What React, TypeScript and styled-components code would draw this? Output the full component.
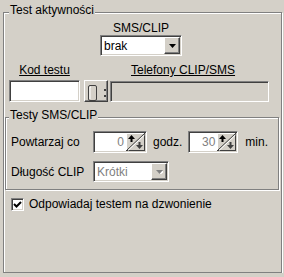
import styled, { createGlobalStyle } from "styled-components";

const Global = createGlobalStyle`
  * { box-sizing: border-box; }
  body {
    margin: 0;
    background: #d4d0c8;
    font-family: "Liberation Sans", Arial, sans-serif;
    font-size: 12px;
    line-height: 14px;
    color: #000;
  }
`;

const Group = styled.div<{ $h: number }>`
  position: relative;
  display: flex;
  flex-direction: column;
  height: ${p => p.$h}px;
  border: 1px solid #808080;
  box-shadow: 1px 1px 0 #fff, inset 1px 1px 0 #fff;
`;

const Outer = styled(Group)`
  margin: 12px 0 0 3px;
  width: 279px;
`;

const Inner = styled(Group)`
  margin: 15px 0 0 1px;
  width: 274px;
  padding-left: 5px;
`;

const Legend = styled.span<{ $x: number }>`
  position: absolute;
  top: -10px;
  left: ${p => p.$x}px;
  padding: 0 1px;
  background: #d4d0c8;
  white-space: nowrap;
`;

const SmsBlock = styled.div`
  margin: 8px 0 0 96px;
  width: 82px;
  display: flex;
  flex-direction: column;
  align-items: center;
`;

const Sunken = styled.div<{ $w: number; $h: number; $bg?: string }>`
  width: ${p => p.$w}px;
  height: ${p => p.$h}px;
  flex: none;
  display: flex;
  align-items: center;
  background: ${p => p.$bg ?? "#fff"};
  border: 1px solid;
  border-color: #808080 #fff #fff #808080;
  box-shadow: inset 1px 1px 0 #404040, inset -1px -1px 0 #d4d0c8;
  padding: 1px;
`;

const Value = styled.span<{ $off?: boolean; $right?: boolean }>`
  flex: 1;
  padding: 0 2px;
  color: ${p => (p.$off ? "#808080" : "#000")};
  text-align: ${p => (p.$right ? "right" : "left")};
  white-space: nowrap;
`;

const Raised = styled.div<{ $w: number; $h: number }>`
  width: ${p => p.$w}px;
  height: ${p => p.$h}px;
  flex: none;
  display: flex;
  align-items: center;
  justify-content: center;
  background: #d4d0c8;
  border: 1px solid;
  border-color: #fff #404040 #404040 #fff;
  box-shadow: inset -1px -1px 0 #808080;
`;

const PickButton = styled(Raised)`
  margin-left: 4px;
  align-items: flex-end;
`;

const Row = styled.div<{ $top: number; $left?: number }>`
  display: flex;
  align-items: center;
  margin-top: ${p => p.$top}px;
  padding-left: ${p => p.$left ?? 0}px;
`;

const Under = styled.span<{ $w?: number; $ml?: number }>`
  text-decoration: underline;
  text-align: center;
  width: ${p => (p.$w ? `${p.$w}px` : "auto")};
  margin-left: ${p => p.$ml ?? 0}px;
  white-space: nowrap;
`;

const Caption = styled.span<{ $w?: number; $ml?: number; $mr?: number }>`
  width: ${p => (p.$w ? `${p.$w}px` : "auto")};
  margin-left: ${p => p.$ml ?? 0}px;
  margin-right: ${p => p.$mr ?? 0}px;
  flex: none;
  white-space: nowrap;
`;

const PhoneField = styled(Sunken)`
  margin-left: 2px;
`;

const Check = styled(Sunken)`
  justify-content: center;
`;

const Arrow = ({ off }: { off?: boolean }) => (
  <svg width="7" height="4" viewBox="0 0 7 4">
    {off && <polygon points="1,1 8,1 4.5,5" fill="#fff" />}
    <polygon points="0,0 7,0 3.5,4" fill={off ? "#808080" : "#000"} />
  </svg>
);

const Combo = ({ w, text, off }: { w: number; text: string; off?: boolean }) => (
  <Sunken $w={w} $h={21}>
    <Value $off={off}>{text}</Value>
    <Raised $w={16} $h={17}>
      <Arrow off={off} />
    </Raised>
  </Sunken>
);

const SpinButton = () => (
  <svg width="19" height="18" viewBox="0 0 19 18" style={{ flex: "none" }}>
    <rect width="19" height="18" fill="#d4d0c8" />
    <path d="M0 .5H18.5M.5 0V18" stroke="#fff" />
    <path d="M0 17.5H19M18.5 0V18" stroke="#404040" />
    <path d="M1 17L18 1" stroke="#404040" />
    <path d="M2 17.5L18.5 2" stroke="#fff" />
    <polygon points="2,6 5.5,2 9,6" fill="#000" />
    <rect x="4.5" y="6" width="2" height="3" fill="#000" />
    <polygon points="10,12 13.5,16 17,12" fill="#404040" />
    <rect x="12.5" y="9" width="2" height="3" fill="#404040" />
  </svg>
);

const Spin = ({ w, value }: { w: number; value: string }) => (
  <Sunken $w={w} $h={22}>
    <Value $off $right>{value}</Value>
    <SpinButton />
  </Sunken>
);

const PickIcon = () => (
  <svg width="22" height="20" viewBox="0 0 22 20">
    <rect x="3.5" y="4.5" width="8" height="15" rx="1.5" fill="#d4d0c8" stroke="#404040" />
    <path d="M5 18V6h1" stroke="#fff" fill="none" />
    <rect x="19" y="8" width="2" height="2" fill="#404040" />
    <rect x="19" y="14" width="2" height="2" fill="#404040" />
  </svg>
);

export default function App() {
  return (
    <>
      <Global />
      <Outer $h={261}>
        <Legend $x={5}>Test aktywności</Legend>

        <SmsBlock>
          <span>SMS/CLIP</span>
          <Combo w={82} text="brak" />
        </SmsBlock>

        <Row $top={7} $left={5}>
          <Under $w={71}>Kod testu</Under>
          <Under $ml={51}>Telefony CLIP/SMS</Under>
        </Row>

        <Row $top={3} $left={5}>
          <Sunken $w={71} $h={22} />
          <PickButton $w={24} $h={22}>
            <PickIcon />
          </PickButton>
          <PhoneField $w={159} $h={21} $bg="#d4d0c8" />
        </Row>

        <Inner $h={73}>
          <Legend $x={3}>Testy SMS/CLIP</Legend>
          <Row $top={13}>
            <Caption $w={82}>Powtarzaj co</Caption>
            <Spin w={54} value="0" />
            <Caption $ml={6} $mr={6}>godz.</Caption>
            <Spin w={50} value="30" />
            <Caption $ml={7}>min.</Caption>
          </Row>
          <Row $top={8}>
            <Caption $w={82}>Długość CLIP</Caption>
            <Combo w={76} text="Krótki" off />
          </Row>
        </Inner>

        <Row $top={7} $left={7}>
          <Check $w={13} $h={13}>
            <svg width="9" height="9" viewBox="0 0 9 9">
              <polyline points="1,4 3.5,6.5 8,2" fill="none" stroke="#000" strokeWidth="2" />
            </svg>
          </Check>
          <Caption $ml={5}>Odpowiadaj testem na dzwonienie</Caption>
        </Row>
      </Outer>
    </>
  );
}
